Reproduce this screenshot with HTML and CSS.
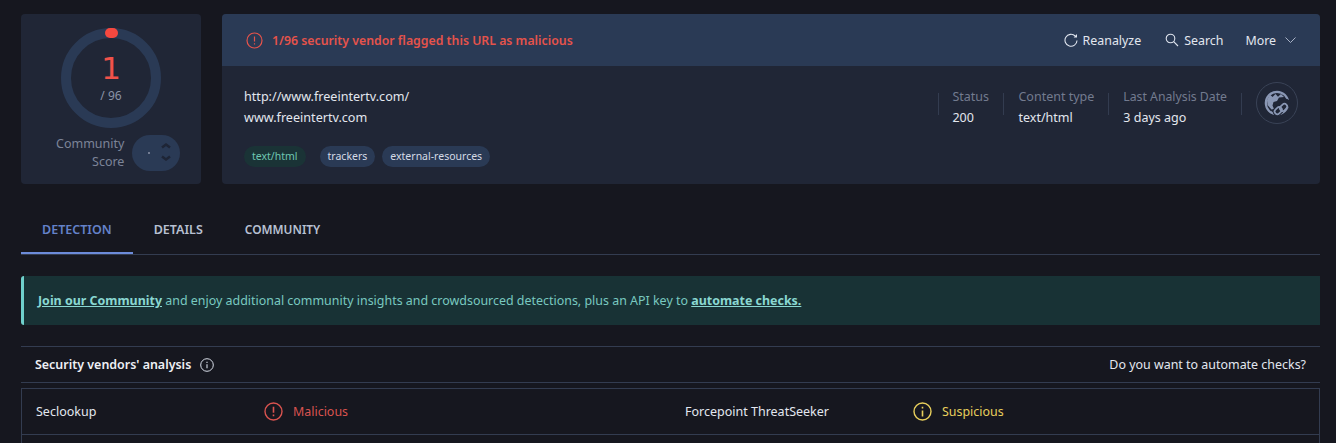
FILE: index.html
```html
<!DOCTYPE html>
<html lang="en">
<head>
<meta charset="utf-8">
<title>URL report</title>
<link rel="stylesheet" href="styles.css">
</head>
<body>
<div class="top">
  <section class="score-card">
    <div class="ring">
      <svg class="ring-svg" width="102" height="102" viewBox="0 0 102 102" aria-hidden="true">
        <circle cx="51" cy="51" r="45" fill="none" stroke="#2a3a55" stroke-width="10"/>
        <rect x="45" y="1" width="13" height="10" rx="5" fill="#f5483f"/>
      </svg>
      <div class="ring-num">1</div>
      <div class="ring-total">/ 96</div>
    </div>
    <div class="community">
      <div class="community-label">Community<br>Score</div>
      <div class="vote">
        <span class="vote-dot"></span>
        <svg width="10" height="26" viewBox="0 0 10 26" aria-hidden="true">
          <path d="M1 7.500 5 4.500l4 3M1 16.500 5 19.500l4-3" fill="none" stroke="#1e2536" stroke-width="2.500"/>
        </svg>
      </div>
    </div>
  </section>
  <section class="main-card">
    <header class="main-head">
      <div class="alert">
        <svg width="17" height="17" viewBox="0 0 17 17" aria-hidden="true">
          <circle cx="8.500" cy="8.500" r="7.500" fill="none" stroke="#e5534b" stroke-width="1.200"/>
          <path d="M8.500 4.500v5M8.500 11.300v1.200" fill="none" stroke="#e5534b" stroke-width="1.200"/>
        </svg>
        <span>1/96 security vendor flagged this URL as malicious</span>
      </div>
      <nav class="actions">
        <a class="action action-first">
          <svg width="14" height="14" viewBox="0 0 14 14" aria-hidden="true">
            <path d="M11.200 3A6 6 0 1 0 13 7.500" fill="none" stroke="#dfe4ee" stroke-width="1.100"/>
            <path d="M13 1v3.400H9.600z" fill="#dfe4ee"/>
          </svg>
          Reanalyze
        </a>
        <a class="action">
          <svg width="14" height="14" viewBox="0 0 14 14" aria-hidden="true">
            <circle cx="5.500" cy="5.500" r="4.300" fill="none" stroke="#dfe4ee" stroke-width="1.100"/>
            <path d="m8.700 8.700 4.300 4.300" fill="none" stroke="#dfe4ee" stroke-width="1.100"/>
          </svg>
          Search
        </a>
        <a class="action action-more">
          More
          <svg width="11" height="7" viewBox="0 0 11 7" aria-hidden="true">
            <path d="m.5.500 5 5 5-5" fill="none" stroke="#a9b2c6" stroke-width="1"/>
          </svg>
        </a>
      </nav>
    </header>
    <div class="main-body">
      <div class="target">
        <div class="url">http://www.freeintertv.com/</div>
        <div class="url">www.freeintertv.com</div>
        <div class="tags">
          <span class="tag tag-green">text/html</span>
          <span class="tag">trackers</span>
          <span class="tag">external-resources</span>
        </div>
      </div>
      <div class="meta">
        <div class="meta-item meta-status"><div class="meta-key">Status</div><div class="meta-val">200</div></div>
        <div class="meta-item"><div class="meta-key">Content type</div><div class="meta-val">text/html</div></div>
        <div class="meta-item"><div class="meta-key meta-key-long">Last Analysis Date</div><div class="meta-val">3 days ago</div></div>
        <div class="meta-item meta-end">
          <div class="globe">
            <svg width="30" height="30" viewBox="0 0 30 30" aria-hidden="true">
              <circle cx="15" cy="15" r="11.200" fill="none" stroke="#8a97b4" stroke-width="2.200"/>
              <path d="M8 6.500 10.500 9l3-3 2.500 2.800L19 6l3 3-5 .5-2 3.500-3.500 1-1 3.500 1.500 3.500-2.500.5-4-4.500L5 12z" fill="#8a97b4"/>
              <g transform="rotate(-45 20 20)" fill="none">
                <rect x="15" y="16.300" width="10" height="7.400" rx="3.700" fill="#202636"/>
                <rect x="11.500" y="16.500" width="8" height="5.400" rx="2.700" stroke="#202636" stroke-width="4"/>
                <rect x="20.500" y="16.500" width="8" height="5.400" rx="2.700" stroke="#202636" stroke-width="4"/>
                <rect x="11.500" y="16.500" width="8" height="5.400" rx="2.700" stroke="#8a97b4" stroke-width="1.700"/>
                <rect x="17.500" y="18" width="8" height="5.400" rx="2.700" stroke="#8a97b4" stroke-width="1.700"/>
              </g>
            </svg>
          </div>
        </div>
      </div>
    </div>
  </section>
</div>

<nav class="tabs">
  <a class="tab tab-active">DETECTION</a>
  <a class="tab">DETAILS</a>
  <a class="tab tab-wide">COMMUNITY</a>
</nav>

<div class="banner">
  <a class="banner-link">Join our Community</a> and enjoy additional community insights and crowdsourced detections, plus an API key to <a class="banner-link">automate checks.</a>
</div>

<div class="analysis-head">
  <div class="analysis-title">
    Security vendors' analysis
    <svg width="14" height="14" viewBox="0 0 14 14" aria-hidden="true">
      <circle cx="7" cy="7" r="6.300" fill="none" stroke="#d8dde8" stroke-width="1"/>
      <path d="M7 6.200v4M7 3.800v1.200" fill="none" stroke="#d8dde8" stroke-width="1.100"/>
    </svg>
  </div>
  <div class="analysis-link">Do you want to automate checks?</div>
</div>

<div class="vendors">
  <div class="vendor-row">
    <div class="vendor-cell">
      <div class="vendor-name">Seclookup</div>
      <div class="verdict verdict-bad">
        <svg width="19" height="19" viewBox="0 0 19 19" aria-hidden="true">
          <circle cx="9.500" cy="9.500" r="8.500" fill="none" stroke="#d9534f" stroke-width="1.400"/>
          <path d="M9.500 4.800v6M9.500 12.600v1.600" fill="none" stroke="#d9534f" stroke-width="1.600"/>
        </svg>
        Malicious
      </div>
    </div>
    <div class="vendor-cell">
      <div class="vendor-name">Forcepoint ThreatSeeker</div>
      <div class="verdict verdict-warn">
        <svg width="19" height="19" viewBox="0 0 19 19" aria-hidden="true">
          <circle cx="9.500" cy="9.500" r="8.500" fill="none" stroke="#e8cf5c" stroke-width="1.400"/>
          <path d="M9.500 8.400v6M9.500 4.800v1.600" fill="none" stroke="#e8cf5c" stroke-width="1.600"/>
        </svg>
        Suspicious
      </div>
    </div>
  </div>
</div>
</body>
</html>
```

FILE: styles.css
```css
* { box-sizing: border-box; }
html, body { height: 100%; }
body {
  margin: 0;
  padding: 14px 16px 0 21px;
  background: #16171f;
  color: #e3e7ef;
  font-family: "Noto Sans", "Open Sans", sans-serif;
  font-size: 12.500px;
  overflow: hidden;
}
.top { display: flex; gap: 21px; height: 170px; }

.score-card {
  width: 180px;
  background: #202636;
  border-radius: 4px;
  display: flex;
  flex-direction: column;
  align-items: center;
  padding-top: 13px;
}
.ring { position: relative; width: 102px; height: 102px; text-align: center; flex: none; }
.ring-svg { position: absolute; left: 0; top: 0; }
.ring-num { padding-top: 22px; font-family: "DejaVu Sans", sans-serif; font-size: 31px; line-height: 38px; color: #f0524a; position: relative; }
.ring-total { color: #8b93a7; font-size: 12px; line-height: 16px; margin-top: 1px; position: relative; }
.community { display: flex; gap: 8px; align-items: center; margin-top: 6px; margin-left: 11px; align-self: stretch; padding-left: 24px; }
.community-label { text-align: right; color: #7c8498; font-size: 12.500px; line-height: 18px; }
.vote {
  width: 48px;
  height: 36px;
  border-radius: 18px;
  background: #2a3a55;
  display: flex;
  align-items: center;
  justify-content: flex-end;
  gap: 11px;
  padding-right: 9px;
}
.vote-dot { width: 2px; height: 2px; border-radius: 50%; background: #8b93a7; }

.main-card { flex: 1; background: #202636; border-radius: 4px; overflow: hidden; display: flex; flex-direction: column; }
.main-head {
  height: 52px;
  background: #2a3a55;
  display: flex;
  align-items: center;
  justify-content: space-between;
  padding: 0 24px 0 24px;
  flex: none;
}
.alert { display: flex; align-items: center; gap: 9px; color: #e5534b; font-weight: 600; font-size: 12.300px; }
.actions { display: flex; align-items: center; gap: 22px; }
.action { display: flex; align-items: center; gap: 5px; color: #e3e7ef; font-size: 12.400px; }
.action-first { margin-right: 2px; }
.action-more { gap: 9px; }

.main-body { flex: 1; display: flex; justify-content: space-between; padding: 20px 22px 0 22px; }
.url { font-size: 12.600px; line-height: 21px; color: #e3e7ef; }
.tags { display: flex; gap: 7px; margin-top: 18px; }
.tag {
  height: 21px;
  line-height: 21px;
  padding: 0 8px;
  border-radius: 11px;
  background: #2a3a55;
  color: #d5dae6;
  font-size: 10.500px;
}
.tag-green { background: #1a3336; color: #6fc6b0; margin-right: 7px; }

.meta { display: flex; align-items: flex-start; }
.meta-item { padding: 0 14px 0 15px; position: relative; }
.meta-item::before {
  content: "";
  position: absolute;
  left: 0;
  top: 7px;
  height: 22px;
  border-left: 1px solid #333c50;
}
.meta-status { padding-left: 14px; min-width: 65px; }
.meta-end { padding: 0 0 0 15px; margin-top: -4px; }
.meta-end::before { top: 11px; }
.meta-key { color: #737b8f; font-size: 12.500px; line-height: 21px; }
.meta-key-long { font-size: 12.250px; }
.meta-val { color: #e3e7ef; font-size: 12.500px; line-height: 21px; }
.globe {
  width: 42px;
  height: 42px;
  border: 1px solid #3a4357;
  border-radius: 50%;
  display: flex;
  align-items: center;
  justify-content: center;
}

.tabs { display: flex; height: 57px; margin-top: 14px; border-bottom: 1px solid #333c50; }
.tab {
  padding: 0 21px;
  line-height: 63px;
  height: 56px;
  color: #b8c0d2;
  font-weight: 600;
  font-size: 12.500px;
}
.tab-wide { font-size: 11.900px; }
.tab-active { color: #6482c9; border-bottom: 2px solid #6c8bd9; }

.banner {
  margin-top: 21px;
  height: 49px;
  line-height: 49px;
  padding-left: 14px;
  background: #183235;
  border-left: 3px solid #6fd0cc;
  border-radius: 3px 0 0 3px;
  color: #79c9c0;
  font-size: 12.450px;
}
.banner-link { color: #8ad8d2; font-weight: 700; text-decoration: underline; }

.analysis-head {
  margin-top: 21px;
  height: 37px;
  border-top: 1px solid #333c50;
  border-bottom: 1px solid #333c50;
  display: flex;
  align-items: center;
  justify-content: space-between;
  padding: 0 14px;
}
.analysis-title { display: flex; align-items: center; gap: 9px; color: #eef0f5; font-weight: 600; font-size: 12.450px; }
.analysis-link { color: #e3e7ef; font-size: 12.450px; }

.vendors { margin-top: 5px; border: 1px solid #333c50; border-bottom: 0; height: 55px; }
.vendor-row { height: 46px; display: grid; grid-template-columns: 649px 1fr; border-bottom: 1px solid #333c50; }
.vendor-cell { display: flex; align-items: center; padding-left: 14px; }
.vendor-name { width: 228px; color: #e3e7ef; font-size: 12.500px; }
.verdict { display: flex; align-items: center; gap: 10px; font-size: 12.450px; }
.verdict-bad { color: #d9534f; }
.verdict-warn { color: #e8cf5c; }
```
